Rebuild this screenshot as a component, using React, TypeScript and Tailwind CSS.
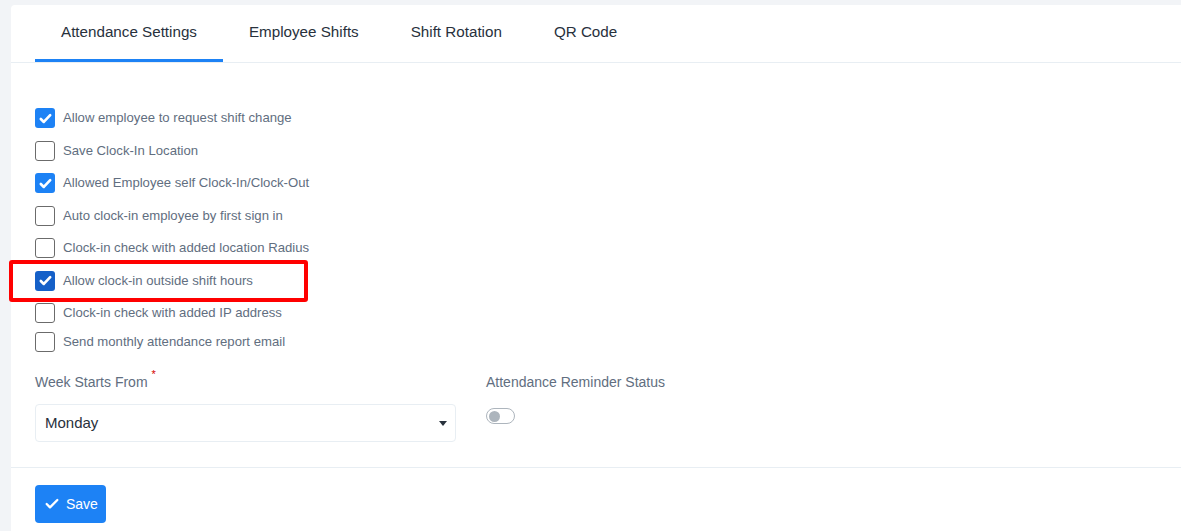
import { Check } from 'lucide-react';

const tabs = ['Attendance Settings', 'Employee Shifts', 'Shift Rotation', 'QR Code'];

const options = [
  { label: 'Allow employee to request shift change', checked: true },
  { label: 'Save Clock-In Location', checked: false },
  { label: 'Allowed Employee self Clock-In/Clock-Out', checked: true },
  { label: 'Auto clock-in employee by first sign in', checked: false },
  { label: 'Clock-in check with added location Radius', checked: false },
  { label: 'Allow clock-in outside shift hours', checked: true, focused: true },
  { label: 'Clock-in check with added IP address', checked: false },
  { label: 'Send monthly attendance report email', checked: false },
];

function Box({ checked, focused }: { checked: boolean; focused?: boolean }) {
  if (checked) {
    return (
      <span
        className={`flex h-5 w-5 shrink-0 items-center justify-center rounded-[3px] ${
          focused ? 'bg-[#1560c8]' : 'bg-[#1d82f5]'
        }`}
      >
        <svg viewBox="0 0 16 16" className="h-[15px] w-[15px]" fill="none">
          <path d="M3 8.5l3.2 3.2L13 4.5" stroke="white" strokeWidth="2.8" strokeLinecap="round" strokeLinejoin="round" />
        </svg>
      </span>
    );
  }
  return <span className="h-5 w-5 shrink-0 rounded-[3px] border border-[#6b6b6b] bg-white" />;
}

export default function App() {
  return (
    <div className="min-h-[531px] bg-[#f2f4f7] pl-[11px] pt-[5px] font-['Liberation_Sans',Arial,sans-serif]">
      <div className="min-h-[526px] rounded-tl-[4px] bg-white">
        <div className="flex h-[58px] border-b border-[#e8eef3] pl-6">
          {tabs.map((t, i) => (
            <div
              key={t}
              className={`flex items-center border-b-[3px] px-[26px] text-[15.2px] text-[#28313c] ${
                i === 0 ? 'border-[#1d82f5]' : 'border-transparent'
              }`}
            >
              {t}
            </div>
          ))}
        </div>

        <div className="px-6 pt-[39px]">
          <div className="flex flex-col">
            {options.map((o, i) => {
              const row = (
                <div className="flex items-center gap-2">
                  <Box checked={o.checked} focused={o.focused} />
                  <span className="text-[13.15px] text-[#616e80]">{o.label}</span>
                </div>
              );
              const h = i >= 6 ? (i === 6 ? 'h-[31px]' : 'h-[28px]') : 'h-[32.5px]';
              if (o.focused) {
                return (
                  <div key={o.label} className={`relative flex items-center ${h}`}>
                    <div className="absolute left-[-26px] top-[-5px] h-[42px] w-[299px] rounded-[3px] border-4 border-[#ff0000]" />
                    {row}
                  </div>
                );
              }
              return (
                <div key={o.label} className={`flex items-center ${h}`}>
                  {row}
                </div>
              );
            })}
          </div>

          <div className="mt-[16px] flex gap-[30px] pb-[25px]">
            <div className="w-[421px]">
              <div className="mb-[11px] flex text-[14px] text-[#616e80]">
                Week Starts From
                <span className="ml-[4px] mt-[-3px] text-[11px] leading-none text-[#d30000]">*</span>
              </div>
              <div className="flex h-[38px] items-center justify-between rounded-[4px] border border-[#e8eef3] pl-[9px] pr-[8px] text-[15px] text-[#28313c]">
                Monday
                <svg viewBox="0 0 10 6" className="h-[5px] w-[8px]">
                  <path d="M0 0h10L5 6z" fill="#28313c" />
                </svg>
              </div>
            </div>
            <div>
              <div className="mb-[15px] text-[14px] text-[#616e80]">Attendance Reminder Status</div>
              <div className="flex h-[16px] w-[29px] items-center rounded-full border border-[#adb5bd] bg-white px-[2px]">
                <span className="h-[11px] w-[11px] rounded-full bg-[#adb5bd]" />
              </div>
            </div>
          </div>
        </div>

        <div className="border-t border-[#e8eef3] px-6 pb-2 pt-[17px]">
          <button className="flex h-[38px] items-center gap-[6px] rounded-[4px] bg-[#1d82f5] pl-[9px] pr-[8px] text-[14px] text-white">
            <Check className="h-4 w-4" strokeWidth={3.5} />
            Save
          </button>
        </div>
      </div>
    </div>
  );
}
